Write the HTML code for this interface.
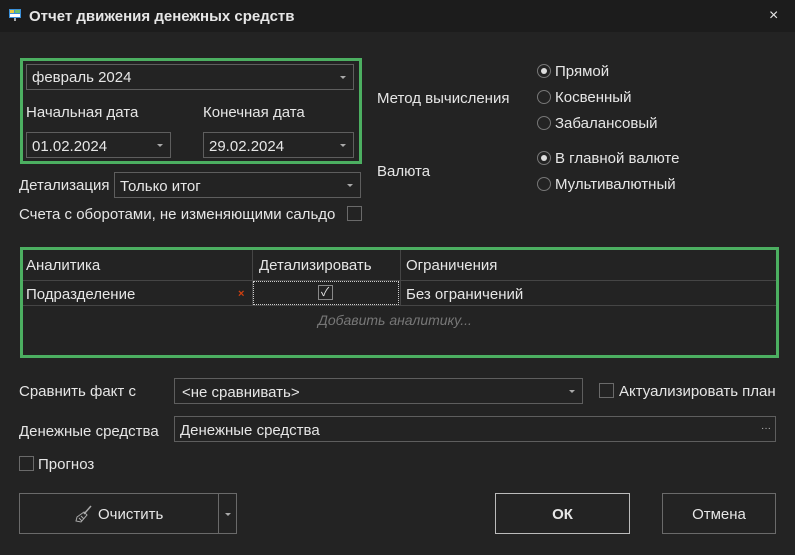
<!DOCTYPE html>
<html><head><meta charset="utf-8"><style>
body{margin:0;width:795px;height:555px;background:#232323;font-family:"Liberation Sans","Noto Sans CJK SC",sans-serif;color:#e6e6e6;font-size:15px;position:relative;overflow:hidden}
.a{position:absolute}
.box{position:absolute;border:1px solid #5e5e5e;box-sizing:border-box;background:#232323}
.arr{position:absolute;right:7px;top:11px;width:0;height:0;border-left:3px solid transparent;border-right:3px solid transparent;border-top:3px solid #aaa}
.t{position:absolute;white-space:nowrap;line-height:19px}
.g{position:absolute;border:3px solid #4caf61;box-sizing:border-box}
.rad{position:absolute;width:14px;height:14px;border:1px solid #777;border-radius:50%;box-sizing:border-box}
.rad.on::after{content:"";position:absolute;left:3px;top:3px;width:6px;height:6px;border-radius:50%;background:#ddd}
.cb{position:absolute;width:15px;height:15px;border:1px solid #6a6a6a;box-sizing:border-box}
.btn{position:absolute;border:1px solid #6a6a6a;box-sizing:border-box;text-align:center}
</style></head><body>
<div class="a" style="left:0;top:0;width:795px;height:32px;background:#1c1c1c"></div>
<svg class="a" style="left:8px;top:8px" width="14" height="14"><rect x="1" y="1" width="12" height="9" fill="#3a8fd8"/><rect x="2" y="2" width="4" height="3" fill="#e8c840"/><rect x="7" y="2" width="5" height="3" fill="#6cc06c"/><rect x="2" y="6" width="10" height="3" fill="#fff"/><rect x="6" y="10" width="2" height="3" fill="#aaa"/></svg>
<div class="t" style="left:29px;top:7px;font-weight:bold;font-size:15px">Отчет движения денежных средств</div>
<div class="t" style="left:769px;top:6px;font-size:16px">×</div>

<div class="g" style="left:20px;top:58px;width:342px;height:106px"></div>
<div class="box" style="left:26px;top:64px;width:328px;height:26px"><span class="t" style="left:5px;top:3px">февраль 2024</span><i class="arr"></i></div>
<div class="t" style="left:26px;top:103px">Начальная дата</div>
<div class="t" style="left:203px;top:103px">Конечная дата</div>
<div class="box" style="left:26px;top:132px;width:145px;height:26px"><span class="t" style="left:5px;top:4px">01.02.2024</span><i class="arr"></i></div>
<div class="box" style="left:203px;top:132px;width:151px;height:26px"><span class="t" style="left:5px;top:4px">29.02.2024</span><i class="arr"></i></div>

<div class="t" style="left:19px;top:176px">Детализация</div>
<div class="box" style="left:114px;top:172px;width:247px;height:26px"><span class="t" style="left:5px;top:4px">Только итог</span><i class="arr"></i></div>
<div class="t" style="left:19px;top:205px">Счета с оборотами, не изменяющими сальдо</div>
<div class="cb" style="left:347px;top:206px"></div>

<div class="t" style="left:377px;top:89px">Метод вычисления</div>
<div class="t" style="left:377px;top:162px">Валюта</div>
<div class="rad on" style="left:537px;top:64px"></div><div class="t" style="left:555px;top:62px">Прямой</div>
<div class="rad" style="left:537px;top:90px"></div><div class="t" style="left:555px;top:88px">Косвенный</div>
<div class="rad" style="left:537px;top:116px"></div><div class="t" style="left:555px;top:114px">Забалансовый</div>
<div class="rad on" style="left:537px;top:151px"></div><div class="t" style="left:555px;top:149px">В главной валюте</div>
<div class="rad" style="left:537px;top:177px"></div><div class="t" style="left:555px;top:175px">Мультивалютный</div>

<div class="g" style="left:20px;top:247px;width:759px;height:111px"></div>
<div class="a" style="left:23px;top:280px;width:753px;height:1px;background:#454545"></div>
<div class="a" style="left:23px;top:305px;width:753px;height:1px;background:#454545"></div>
<div class="a" style="left:252px;top:250px;width:1px;height:55px;background:#454545"></div>
<div class="a" style="left:400px;top:250px;width:1px;height:55px;background:#454545"></div>
<div class="t" style="left:26px;top:256px">Аналитика</div>
<div class="t" style="left:259px;top:256px">Детализировать</div>
<div class="t" style="left:406px;top:256px">Ограничения</div>
<div class="t" style="left:26px;top:285px">Подразделение</div>
<div class="t" style="left:238px;top:285px;color:#d04010;font-size:11px;font-weight:bold">×</div>
<div class="a" style="left:253px;top:281px;width:146px;height:24px;border:1px dotted #ccc;box-sizing:border-box"></div>
<div class="cb" style="left:318px;top:285px;border-color:#888"><span class="t" style="left:2px;top:-3px;font-size:12px">✓</span></div>
<div class="t" style="left:406px;top:285px">Без ограничений</div>
<div class="t" style="left:318px;top:311px;color:#777;font-style:italic;font-size:14px">Добавить аналитику...</div>

<div class="t" style="left:19px;top:382px">Сравнить факт с</div>
<div class="box" style="left:174px;top:378px;width:409px;height:26px"><span class="t" style="left:7px;top:4px">&lt;не сравнивать&gt;</span><i class="arr"></i></div>
<div class="cb" style="left:599px;top:383px"></div>
<div class="t" style="left:619px;top:382px">Актуализировать план</div>
<div class="t" style="left:19px;top:422px">Денежные средства</div>
<div class="box" style="left:174px;top:416px;width:602px;height:26px"><span class="t" style="left:5px;top:4px">Денежные средства</span><span class="t" style="right:4px;top:2px;font-size:10px;color:#bbb">···</span></div>
<div class="cb" style="left:19px;top:456px"></div>
<div class="t" style="left:38px;top:455px">Прогноз</div>

<div class="btn" style="left:19px;top:493px;width:218px;height:41px"></div>
<div class="a" style="left:218px;top:493px;width:1px;height:41px;background:#6a6a6a"></div>
<div class="a" style="left:225px;top:513px;border-left:3px solid transparent;border-right:3px solid transparent;border-top:3px solid #aaa"></div>
<svg class="a" style="left:74px;top:504px" width="20" height="20"><path d="M17 2 L10 10" stroke="#aaa" stroke-width="1.5"/><path d="M10 8 L13 11 L7 18 L2 17 L3 13 Z" fill="none" stroke="#aaa"/><path d="M5 14 L8 17 M7 12 L10 15" stroke="#aaa"/></svg>
<div class="t" style="left:98px;top:505px">Очистить</div>
<div class="btn" style="left:495px;top:493px;width:135px;height:41px;border-color:#bbb"><span class="t" style="left:0;right:0;top:11px;font-weight:bold">ОК</span></div>
<div class="btn" style="left:662px;top:493px;width:114px;height:41px"><span class="t" style="left:0;right:0;top:11px">Отмена</span></div>
</body></html>
